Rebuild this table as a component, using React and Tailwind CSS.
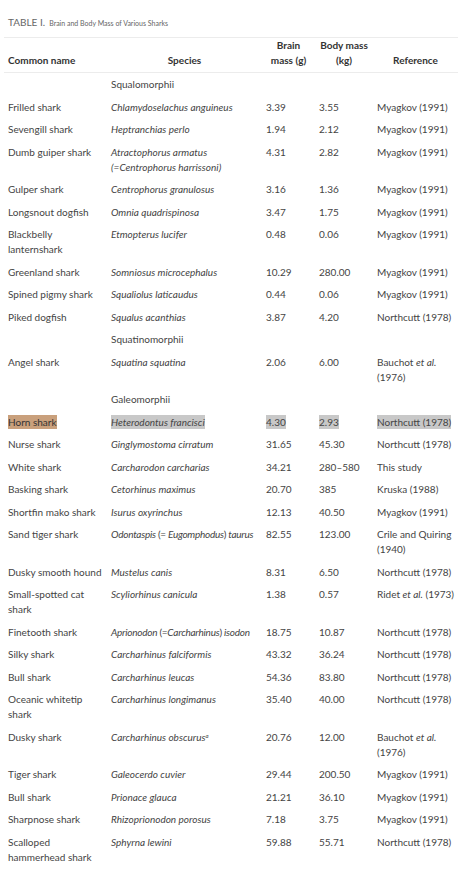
import React from "react";

const rows = [
  { group: "Squalomorphii" },
  { c: "Frilled shark", s: <>Chlamydoselachus anguineus</>, b: "3.39", m: "3.55", r: "Myagkov (1991)" },
  { c: "Sevengill shark", s: <>Heptranchias perlo</>, b: "1.94", m: "2.12", r: "Myagkov (1991)" },
  { c: "Dumb guiper shark", s: <>Atractophorus armatus (=Centrophorus harrissoni)</>, b: "4.31", m: "2.82", r: "Myagkov (1991)", wrap: true },
  { c: "Gulper shark", s: <>Centrophorus granulosus</>, b: "3.16", m: "1.36", r: "Myagkov (1991)" },
  { c: "Longsnout dogfish", s: <>Omnia quadrispinosa</>, b: "3.47", m: "1.75", r: "Myagkov (1991)" },
  { c: "Blackbelly lanternshark", s: <>Etmopterus lucifer</>, b: "0.48", m: "0.06", r: "Myagkov (1991)" },
  { c: "Greenland shark", s: <>Somniosus microcephalus</>, b: "10.29", m: "280.00", r: "Myagkov (1991)" },
  { c: "Spined pigmy shark", s: <>Squaliolus laticaudus</>, b: "0.44", m: "0.06", r: "Myagkov (1991)" },
  { c: "Piked dogfish", s: <>Squalus acanthias</>, b: "3.87", m: "4.20", r: "Northcutt (1978)" },
  { group: "Squatinomorphii" },
  { c: "Angel shark", s: <>Squatina squatina</>, b: "2.06", m: "6.00", r: <>Bauchot <i>et al.</i> (1976)</> },
  { group: "Galeomorphii" },
  { c: "Horn shark", s: <>Heterodontus francisci</>, b: "4.30", m: "2.93", r: "Northcutt (1978)", hl: true },
  { c: "Nurse shark", s: <>Ginglymostoma cirratum</>, b: "31.65", m: "45.30", r: "Northcutt (1978)" },
  { c: "White shark", s: <>Carcharodon carcharias</>, b: "34.21", m: "280–580", r: "This study" },
  { c: "Basking shark", s: <>Cetorhinus maximus</>, b: "20.70", m: "385", r: "Kruska (1988)" },
  { c: "Shortfin mako shark", s: <>Isurus oxyrinchus</>, b: "12.13", m: "40.50", r: "Myagkov (1991)" },
  { c: "Sand tiger shark", s: <>Odontaspis <span className="not-italic">(=</span> Eugomphodus<span className="not-italic">)</span> taurus</>, b: "82.55", m: "123.00", r: "Crile and Quiring (1940)", tight: true },
  { c: "Dusky smooth hound", s: <>Mustelus canis</>, b: "8.31", m: "6.50", r: "Northcutt (1978)" },
  { c: "Small-spotted cat shark", s: <>Scyliorhinus canicula</>, b: "1.38", m: "0.57", r: <>Ridet <i>et al.</i> (1973)</>, rnowrap: true },
  { c: "Finetooth shark", s: <>Aprionodon <span className="not-italic">(=</span>Carcharhinus<span className="not-italic">)</span> isodon</>, b: "18.75", m: "10.87", r: "Northcutt (1978)", tight: true },
  { c: "Silky shark", s: <>Carcharhinus falciformis</>, b: "43.32", m: "36.24", r: "Northcutt (1978)" },
  { c: "Bull shark", s: <>Carcharhinus leucas</>, b: "54.36", m: "83.80", r: "Northcutt (1978)" },
  { c: "Oceanic whitetip shark", s: <>Carcharhinus longimanus</>, b: "35.40", m: "40.00", r: "Northcutt (1978)" },
  { c: "Dusky shark", s: <>Carcharhinus obscurus<sup className="text-[6px]">a</sup></>, b: "20.76", m: "12.00", r: <>Bauchot <i>et al.</i> (1976)</> },
  { c: "Tiger shark", s: <>Galeocerdo cuvier</>, b: "29.44", m: "200.50", r: "Myagkov (1991)" },
  { c: "Bull shark", s: <>Prionace glauca</>, b: "21.21", m: "36.10", r: "Myagkov (1991)" },
  { c: "Sharpnose shark", s: <>Rhizoprionodon porosus</>, b: "7.18", m: "3.75", r: "Myagkov (1991)" },
  { c: "Scalloped hammerhead shark", s: <>Sphyrna lewini</>, b: "59.88", m: "55.71", r: "Northcutt (1978)" },
];

function Hl({ on, color, children }) {
  if (!on) return children;
  return <span className={`${color} py-[1px]`}>{children}</span>;
}

export default function App() {
  const td = "px-[4px] pt-[4px] pb-[3.5px] align-top";
  return (
    <div className="w-[467px] bg-white text-[#444] px-[4px] pt-[8px]" style={{ fontFamily: "Lato, 'Open Sans', sans-serif" }}>
      <div className="pl-[4px] h-[29px] text-[#666]">
        <span className="text-[10px]">TABLE I.</span>{" "}
        <span className="text-[7px]">Brain and Body Mass of Various Sharks</span>
      </div>
      <table className="table-fixed border-collapse w-[454px] text-[10px] leading-[15px]">
        <colgroup>
          <col className="w-[103px]" />
          <col className="w-[155px]" />
          <col className="w-[53px]" />
          <col className="w-[58px]" />
          <col className="w-[85px]" />
        </colgroup>
        <thead>
          <tr className="border-t border-b border-[#ececec] text-[#333] font-bold">
            <th className="px-[4px] pt-[4px] pb-[4px] align-bottom text-left font-bold">Common name</th>
            <th className="px-[4px] pb-[4px] align-bottom text-center font-bold">Species</th>
            <th className="px-[4px] pb-[4px] align-bottom text-center font-bold">Brain mass (g)</th>
            <th className="px-[4px] pb-[4px] align-bottom text-center font-bold">Body mass (kg)</th>
            <th className="px-[4px] pb-[4px] align-bottom text-center font-bold">Reference</th>
          </tr>
        </thead>
        <tbody>
          {rows.map((row, i) =>
            row.group ? (
              <tr key={i}>
                <td className={td}></td>
                <td className={td}>{row.group}</td>
                <td className={td}></td>
                <td className={td}></td>
                <td className={td}></td>
              </tr>
            ) : (
              <tr key={i}>
                <td className={td}>
                  <Hl on={row.hl} color="bg-[#c9a07c] text-[#333]">{row.c}</Hl>
                </td>
                <td className={`${td} italic ${row.wrap ? "" : "whitespace-nowrap"} ${row.tight ? "tracking-[-0.25px]" : ""}`}>
                  <Hl on={row.hl} color="bg-[#c8c8c8]">{row.s}</Hl>
                </td>
                <td className={td}>
                  <Hl on={row.hl} color="bg-[#c8c8c8]">{row.b}</Hl>
                </td>
                <td className={td}>
                  <Hl on={row.hl} color="bg-[#c8c8c8]">{row.m}</Hl>
                </td>
                <td className={`${td} ${row.rnowrap ? "whitespace-nowrap" : ""}`}>
                  <Hl on={row.hl} color="bg-[#c8c8c8]">{row.r}</Hl>
                </td>
              </tr>
            )
          )}
        </tbody>
      </table>
    </div>
  );
}
